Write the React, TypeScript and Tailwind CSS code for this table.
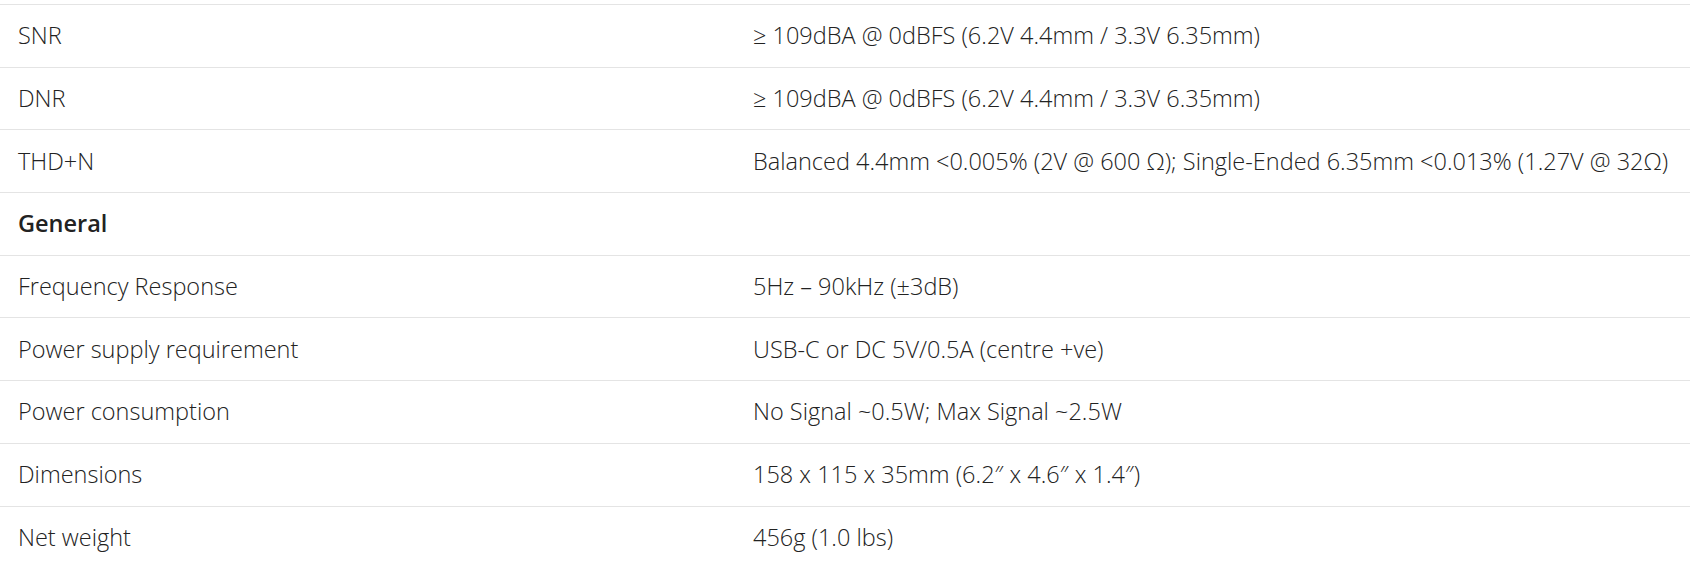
import React from 'react'

type Row = { label: string, value?: string, heading?: boolean }

const rows: Row[] = [
  { label: 'SNR', value: '≥ 109dBA @ 0dBFS (6.2V 4.4mm / 3.3V 6.35mm)' },
  { label: 'DNR', value: '≥ 109dBA @ 0dBFS (6.2V 4.4mm / 3.3V 6.35mm)' },
  { label: 'THD+N', value: 'Balanced 4.4mm <0.005% (2V @ 600 Ω); Single-Ended 6.35mm <0.013% (1.27V @ 32Ω)' },
  { label: 'General', heading: true },
  { label: 'Frequency Response', value: '5Hz – 90kHz (±3dB)' },
  { label: 'Power supply requirement', value: 'USB-C or DC 5V/0.5A (centre +ve)' },
  { label: 'Power consumption', value: 'No Signal ~0.5W; Max Signal ~2.5W' },
  { label: 'Dimensions', value: '158 x 115 x 35mm (6.2″ x 4.6″ x 1.4″)' },
  { label: 'Net weight', value: '456g (1.0 lbs)' },
]

export default function App() {
  return (
    <div className="w-[1690px] h-[565px] overflow-hidden bg-white text-[#222] font-['Open_Sans',sans-serif]">
      <div className="h-[5px] border-b border-[#e4e4e4]" />
      {rows.map((r, i) => (
        <div key={i} className="h-[62.7px] border-b border-[#e4e4e4] flex items-center">
          <div className={`w-[753px] pl-[18px] text-[23.5px] ${r.heading ? 'font-semibold' : 'font-light'}`}>{r.label}</div>
          {r.value && (
            <div className="text-[23.5px] font-light whitespace-nowrap">{r.value}</div>
          )}
        </div>
      ))}
    </div>
  )
}
